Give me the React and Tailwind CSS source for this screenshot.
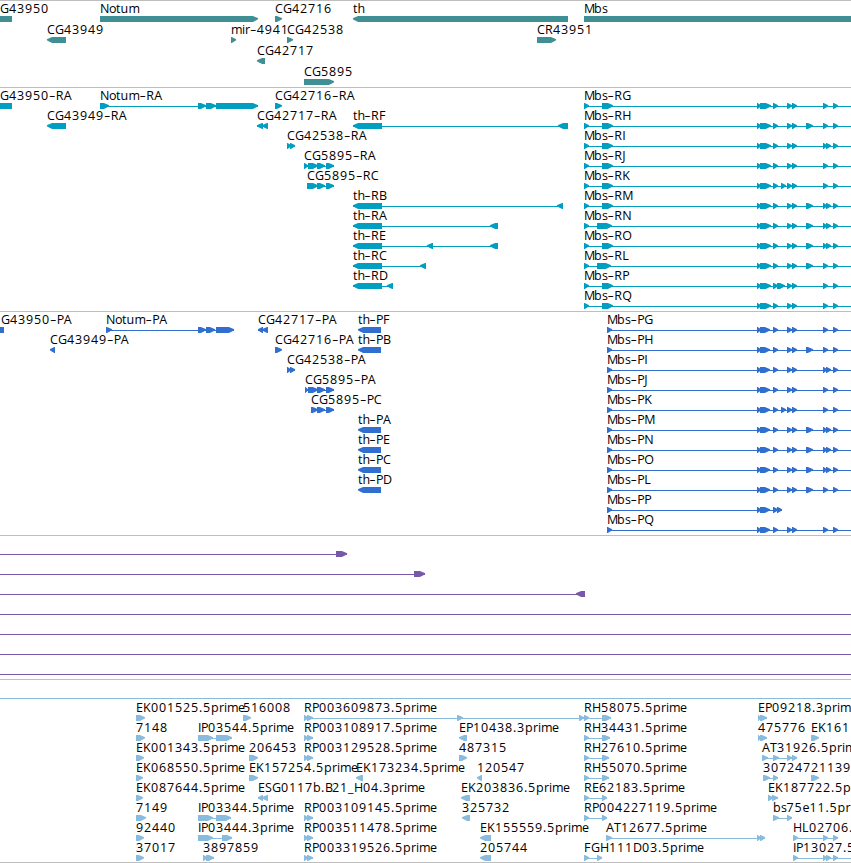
import React from "react";

const WIDTH = 851;

// Glyph advances in px, everything else is 8
const ADVANCE = {
  G: 9, H: 9, N: 9, D: 9, O: 10, Q: 10, M: 10, E: 7, P: 7, S: 7, T: 7, B: 7, F: 7, L: 7,
  I: 3, J: 4, h: 6.8, m: 11, o: 7, t: 4.4, s: 5.5, r: 5, i: 3, e: 7, ".": 4, "-": 6.8, _: 6,
};

const right = (label, x, parts) => ({ label, x, parts, dir: "right" });
const left = (label, x, parts) => ({ label, x, parts, dir: "left" });

// Exons shared by the Mbs transcripts and proteins
const TAIL = [[787, 792], [792, 797]];
const END = [[823, 828], [833, 838], [870, 880]];
const END_DOUBLE = [[823, 827], [826, 831], [833, 838], [870, 880]];
const MID = [[806, 813]];

const mbsR = (name, { second = [602, 613], extra = [], mid = [], end = END } = {}) =>
  right(name, 584, [[584, 589], second, [757, 761], [760, 771], [773, 778], ...extra, ...TAIL, ...mid, ...end]);

const mbsP = (name, { extra = [], mid = [], end = END } = {}) =>
  right(name, 607, [[607, 612], [757, 761], [760, 770], [773, 778], ...extra, ...TAIL, ...mid, ...end]);

const thR = (name, ...rest) => left(name, 353, [[353, 382], ...rest]);
const thP = (name) => left(name, 358, [[358, 381]]);
const rp = (name) => right(name, 304, [[304, 308], [307, 313]]);

const genes = [
  [
    left("G43950", 0, [[-20, 12]]),
    right("Notum", 100, [[100, 258]]),
    right("CG42716", 275, [[275, 282]]),
    left("th", 353, [[353, 568]]),
    right("Mbs", 584, [[584, 880]]),
  ],
  [
    left("CG43949", 47, [[47, 66]]),
    right("mir-4941", 231, [[231, 236]]),
    right("CG42538", 287, [[287, 293]]),
    right("CR43951", 537, [[537, 556]]),
  ],
  [left("CG42717", 257, [[257, 265]])],
  [right("CG5895", 304, [[304, 334]])],
];

const transcripts = [
  [
    left("G43950-RA", 0, [[-20, 12]]),
    right("Notum-RA", 100, [[100, 109], [198, 206], [206, 216], [216, 258]]),
    right("CG42716-RA", 275, [[275, 282]]),
    mbsR("Mbs-RG"),
  ],
  [
    left("CG43949-RA", 47, [[47, 66]]),
    left("CG42717-RA", 257, [[257, 263], [262, 268]]),
    thR("th-RF", [558, 568]),
    mbsR("Mbs-RH", { mid: MID }),
  ],
  [right("CG42538-RA", 287, [[287, 291], [290, 295]]), mbsR("Mbs-RI", { end: END_DOUBLE })],
  [right("CG5895-RA", 304, [[304, 308], [308, 318], [317, 325], [326, 334]]), mbsR("Mbs-RJ")],
  [
    right("CG5895-RC", 307, [[307, 318], [317, 325], [326, 334]]),
    mbsR("Mbs-RK", { extra: [[781, 786]] }),
  ],
  [thR("th-RB", [557, 563]), mbsR("Mbs-RM", { mid: MID, end: END_DOUBLE })],
  [thR("th-RA", [490, 498]), mbsR("Mbs-RN", { second: [597, 612], mid: MID, end: END_DOUBLE })],
  [thR("th-RE", [427, 433], [490, 498]), mbsR("Mbs-RO", { mid: MID, end: END_DOUBLE })],
  [thR("th-RC", [420, 426]), mbsR("Mbs-RL", { second: [597, 611], mid: MID })],
  [thR("th-RD", [387, 393]), mbsR("Mbs-RP", { extra: [[777, 785]] })],
  [mbsR("Mbs-RQ")],
];

const proteins = [
  [
    left("G43950-PA", 1, [[-20, 4]]),
    right("Notum-PA", 106, [[106, 112], [198, 206], [206, 215], [216, 234]]),
    left("CG42717-PA", 258, [[258, 263], [262, 268]]),
    thP("th-PF"),
    mbsP("Mbs-PG"),
  ],
  [
    left("CG43949-PA", 50, [[50, 55]]),
    right("CG42716-PA", 275, [[275, 282]]),
    thP("th-PB"),
    mbsP("Mbs-PH", { mid: MID }),
  ],
  [right("CG42538-PA", 287, [[287, 291], [290, 295]]), mbsP("Mbs-PI", { end: END_DOUBLE })],
  [right("CG5895-PA", 305, [[305, 308], [308, 318], [317, 325], [326, 334]]), mbsP("Mbs-PJ")],
  [
    right("CG5895-PC", 311, [[311, 318], [317, 325], [326, 334]]),
    mbsP("Mbs-PK", { extra: [[781, 786]] }),
  ],
  [thP("th-PA"), mbsP("Mbs-PM", { mid: MID, end: END_DOUBLE })],
  [thP("th-PE"), mbsP("Mbs-PN", { mid: MID, end: END_DOUBLE })],
  [thP("th-PC"), mbsP("Mbs-PO", { mid: MID, end: END_DOUBLE })],
  [thP("th-PD"), mbsP("Mbs-PL", { mid: MID })],
  [right("Mbs-PP", 607, [[607, 612], [757, 761], [760, 770], [773, 778], [777, 782]])],
  [mbsP("Mbs-PQ")],
];

// Features that only show their intron line in this window
const through = right("", 0, [[-20, -10], [870, 880]]);

const insertions = [
  [right("", 0, [[-20, -10], [336, 347]])],
  [right("", 0, [[-20, -10], [414, 425]])],
  [left("", 0, [[-20, -10], [576, 585]])],
  [through],
  [through],
  [through],
  [through],
];

const clones = [
  [through],
  [
    right("EK001525.5prime", 136, [[136, 145]]),
    right("516008", 243, [[243, 251]]),
    right("RP003609873.5prime", 304, [[304, 308], [307, 313], [457, 463], [579, 584]]),
    right("RH58075.5prime", 584, [[584, 589], [602, 611]]),
    right("EP09218.3prim", 758, [[758, 761], [760, 767]]),
  ],
  [
    right("7148", 136, [[136, 145]]),
    right("IP03544.5prime", 198, [[198, 213], [216, 232]]),
    rp("RP003108917.5prime"),
    left("EP10438.3prime", 459, [[459, 467]]),
    right("RH34431.5prime", 584, [[584, 589], [602, 610]]),
    right("475776", 758, [[758, 761], [760, 767]]),
    right("EK161", 811, [[811, 819]]),
  ],
  [
    right("EK001343.5prime", 136, [[136, 144]]),
    right("206453", 249, [[249, 258]]),
    rp("RP003129528.5prime"),
    right("487315", 459, [[459, 467]]),
    right("RH27610.5prime", 584, [[584, 589], [602, 609]]),
    right("AT31926.5prim", 762, [[762, 768], [773, 779], [787, 792], [792, 797]]),
  ],
  [
    right("EK068550.5prime", 136, [[136, 143]]),
    right("EK157254.5prime", 249, [[249, 258]]),
    left("EK173234.5prime", 356, [[356, 363]]),
    left("120547", 477, [[477, 482]]),
    right("RH55070.5prime", 584, [[584, 589], [602, 609]]),
    right("307247", 763, [[763, 770], [773, 778]]),
    right("21139", 811, [[811, 819]]),
  ],
  [
    right("EK087644.5prime", 136, [[136, 143]]),
    left("ESG0117b.B21_H04.3prime", 258, [[258, 263], [262, 268]]),
    left("EK203836.5prime", 461, [[461, 470]]),
    right("RE62183.5prime", 584, [[584, 589], [602, 607]]),
    right("EK187722.5p", 768, [[768, 773], [772, 778]]),
  ],
  [
    right("7149", 136, [[136, 146]]),
    right("IP03344.5prime", 198, [[198, 213], [216, 231]]),
    rp("RP003109145.5prime"),
    left("325732", 462, [[462, 470]]),
    right("RP004227119.5prime", 584, [[584, 589], [602, 607]]),
    right("bs75e11.5pr", 773, [[773, 779], [787, 792]]),
  ],
  [
    right("92440", 136, [[136, 144]]),
    right("IP03444.3prime", 198, [[198, 213], [222, 232]]),
    rp("RP003511478.5prime"),
    left("EK155559.5prime", 480, [[480, 491]]),
    right("AT12677.5prime", 606, [[606, 612], [757, 761], [760, 765]]),
    right("HL02706.", 793, [[793, 798], [823, 828], [833, 838]]),
  ],
  [
    right("37017", 136, [[136, 144]]),
    right("3897859", 203, [[203, 207], [206, 214]]),
    rp("RP003319526.5prime"),
    left("205744", 480, [[480, 491]]),
    right("FGH111D03.5prime", 584, [[584, 589], [597, 602]]),
    right("IP13027.5", 793, [[793, 798], [823, 827], [826, 831], [833, 838], [870, 880]]),
  ],
];

const glyphPositions = (label, x) => {
  let pos = x;
  return [...label]
    .map((ch) => {
      const at = pos;
      pos += ADVANCE[ch] ?? 8;
      return at;
    })
    .join(" ");
};

// Box with a rounded-off pointed head, 6px tall
const arrowPoints = ([start, end], dir) => {
  const head = Math.min(6, end - start);
  const flip = dir === "right" ? 1 : -1;
  const tail = dir === "right" ? start : end;
  const tip = dir === "right" ? end : start;
  const neck = tip - flip * head * 0.85;
  const cheek = tip - flip * head * 0.35;
  return [
    [tail, 15], [neck, 15], [cheek, 16.3], [tip + flip * 0.1, 17.3],
    [tip + flip * 0.1, 18.2], [cheek, 19.5], [neck, 21], [tail, 21],
  ].join(" ");
};

// The hyphen is drawn larger and lighter so that it fills its cell
const Label = ({ text, x }) => {
  const [head, tail] = text.split("-");

  return (
    <text x={glyphPositions(text, x)} y="12" className="fill-black">
      {head}
      {tail && (
        <>
          <tspan dy="1.8" className="text-[20px] font-light">-</tspan>
          <tspan dy="-1.8">{tail}</tspan>
        </>
      )}
    </text>
  );
};

const Feature = ({ label, x, parts, dir }) => {
  const start = parts[0][0];
  const end = parts[parts.length - 1][1];

  return (
    <g>
      {parts.length > 1 && <rect x={start} y="18" width={end - start} height="1" />}
      {parts.map((part, i) => (
        <polygon key={i} points={arrowPoints(part, dir)} />
      ))}
      {label && <Label text={label} x={x} />}
    </g>
  );
};

const Track = ({ rows, pitch = 20, pad = 3, className }) => {
  const height = rows.length * pitch + pad;

  return (
    <section className="border-t border-[#bebebe]">
      <svg
        width={WIDTH}
        height={height}
        className={`block font-['Open_Sans','Noto_Sans',sans-serif] text-[12.5px] ${className}`}
      >
        {rows.map((features, row) => (
          <g key={row} transform={`translate(0 ${row * pitch})`}>
            {features.map((feature, i) => (
              <Feature key={i} {...feature} />
            ))}
          </g>
        ))}
      </svg>
    </section>
  );
};

const App = () => {
  return (
    <main className="w-[851px] h-[863px] overflow-hidden bg-white flex flex-col border-b border-[#bebebe]">
      <Track rows={genes} pitch={21} pad={2} className="fill-[#3f8f94]" />
      <Track rows={transcripts} className="fill-[#009fc1]" />
      <Track rows={proteins} className="fill-[#306fcf]" />
      <Track rows={insertions} className="fill-[#7859a9]" />
      <Track rows={clones} pad={2} className="fill-[#88bbdd]" />
    </main>
  );
};

export default App;
